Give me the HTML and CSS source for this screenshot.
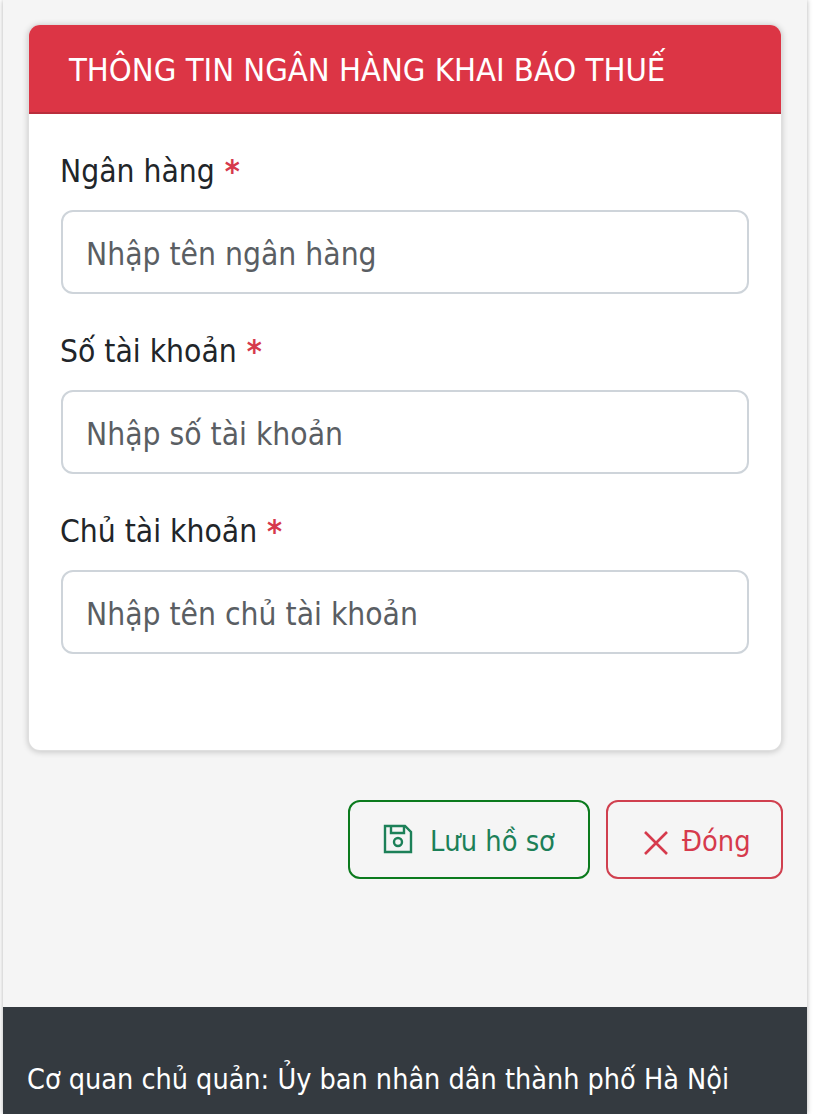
FILE: index.html
```html
<!DOCTYPE html>
<html lang="vi">
<head>
  <meta charset="UTF-8">
  <title>Thông tin ngân hàng khai báo thuế</title>
  <link rel="stylesheet" href="styles.css">
</head>
<body>
  <div class="page">
    <main class="content">
      <section class="card">
        <h2 class="card-header">THÔNG TIN NGÂN HÀNG KHAI BÁO THUẾ</h2>
        <div class="card-body">
          <div class="field">
            <label class="field-label">Ngân hàng <span class="required">*</span></label>
            <input class="field-input" type="text" placeholder="Nhập tên ngân hàng">
          </div>
          <div class="field">
            <label class="field-label">Số tài khoản <span class="required">*</span></label>
            <input class="field-input" type="text" placeholder="Nhập số tài khoản">
          </div>
          <div class="field">
            <label class="field-label">Chủ tài khoản <span class="required">*</span></label>
            <input class="field-input" type="text" placeholder="Nhập tên chủ tài khoản">
          </div>
        </div>
      </section>

      <div class="actions">
        <button class="btn btn-save" type="button">
          <svg class="btn-icon" viewBox="0 0 30 30" fill="none" stroke="currentColor" stroke-width="2.4">
            <path d="M2 2h20l6 6v20H2z"/>
            <path d="M8 2v7h13V2"/>
            <circle cx="15" cy="18" r="4"/>
          </svg>
          Lưu hồ sơ
        </button>
        <button class="btn btn-close" type="button">
          <svg class="btn-icon-x" viewBox="0 0 24 24" fill="none" stroke="currentColor" stroke-width="2.6">
            <path d="M1 1l22 22M23 1L1 23"/>
          </svg>
          Đóng
        </button>
      </div>
    </main>

    <footer class="footer">
      <p>Cơ quan chủ quản: Ủy ban nhân dân thành phố Hà Nội</p>
    </footer>
  </div>
</body>
</html>
```

FILE: styles.css
```css
* {
  margin: 0;
  padding: 0;
  box-sizing: border-box;
  font-family: "DejaVu Sans Condensed", "DejaVu Sans", sans-serif;
}

html, body {
  height: 1114px;
  overflow: hidden;
}

body {
  background: #ffffff;
  padding: 0 7px 0 3px;
}

.page {
  height: 1114px;
  background: #f5f5f5;
  box-shadow: 0 0 5px rgba(0, 0, 0, 0.3);
  display: flex;
  flex-direction: column;
}

.content {
  flex: none;
  height: 1007px;
  padding: 24px 25px 0;
}

.card {
  height: 727px;
  background: #ffffff;
  border: 1px solid rgba(0, 0, 0, 0.125);
  border-radius: 12px;
  overflow: hidden;
  box-shadow: 0 1px 6px rgba(0, 0, 0, 0.2);
}

.card-header {
  height: 89px;
  padding: 3px 0 0 40px;
  background: #dc3545;
  border-bottom: 2px solid #b92e3c;
  color: #ffffff;
  font-size: 32.5px;
  font-weight: 400;
  line-height: 84px;
}

.card-body {
  padding: 32px 32px 0;
}

.field {
  margin-bottom: 32px;
}

.field-label {
  display: block;
  padding-top: 1px;
  margin: 0 0 15px -1px;
  color: #212529;
  font-size: 31.5px;
  line-height: 48px;
}

.required {
  margin-left: 1px;
  color: #d63a4c;
  font-size: 32px;
  font-weight: 700;
}

.field-input {
  display: block;
  width: 100%;
  height: 84px;
  padding: 4px 23px 0;
  background: #ffffff;
  border: 2px solid #ced4da;
  border-radius: 12px;
  font-size: 31.5px;
  color: #212529;
}

.field-input::placeholder {
  color: #5a5e63;
  opacity: 1;
}

.actions {
  display: flex;
  justify-content: flex-end;
  gap: 16px;
  margin: 49px -1px 0 0;
}

.btn {
  display: flex;
  align-items: center;
  height: 79px;
  padding-top: 3px;
  background: transparent;
  border-radius: 12px;
  font-size: 28.7px;
}

.btn-save {
  width: 242px;
  padding-left: 33px;
  border: 2px solid #0b7a1d;
  color: #1c8058;
}

.btn-close {
  width: 177px;
  padding-left: 36px;
  border: 2px solid #d0404f;
  color: #d63a4c;
}

.btn-icon {
  width: 30px;
  height: 30px;
  margin: 0 17px 4px 0;
}

.btn-icon-x {
  width: 24px;
  height: 24px;
  margin: 3px 14px 0 0;
}

.footer {
  flex: 1;
  background: #343a40;
  color: #ffffff;
  padding: 49px 24px 0;
  font-size: 28.5px;
  line-height: 48px;
}
```
